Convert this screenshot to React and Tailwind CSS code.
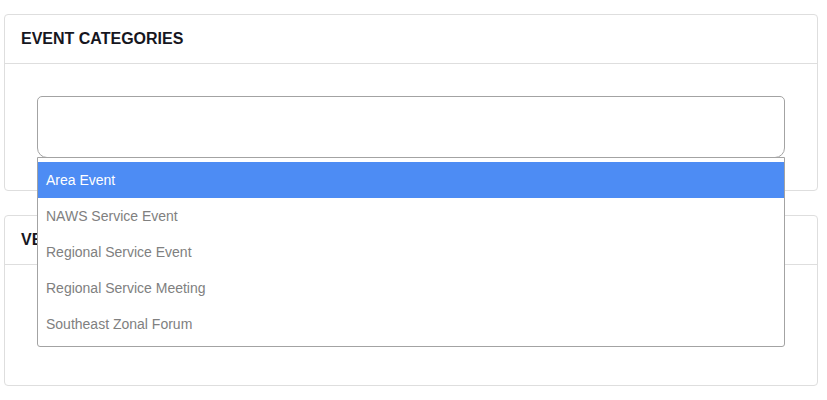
import React, { useState } from "react";

const CATEGORIES = [
  "Area Event",
  "NAWS Service Event",
  "Regional Service Event",
  "Regional Service Meeting",
  "Southeast Zonal Forum",
];

function Card({ title, children }) {
  return (
    <div className="rounded-[4px] border border-[#dedede] bg-white">
      <div className="flex h-[49px] items-center border-b border-[#dedede] px-4 text-[16px] font-bold text-[#16161e]">
        {title}
      </div>
      {children}
    </div>
  );
}

export default function App() {
  const [selected, setSelected] = useState("Area Event");

  return (
    <div className="min-h-[400px] bg-white pt-[14px] pl-[4px] pr-[9px] font-['Liberation_Sans',Arial,sans-serif]">
      <Card title="EVENT CATEGORIES">
        <div className="p-8">
          {/* open select */}
          <div className="relative z-10">
            <div className="h-[62px] rounded-t-[5px] rounded-b-[10px] border border-[#a3a3a3] bg-white" />
            <ul className="absolute top-[61px] left-0 right-0 rounded-b-[3px] border border-[#a3a3a3] bg-white py-1">
              {CATEGORIES.map((c) => (
                <li
                  key={c}
                  onMouseDown={() => setSelected(c)}
                  className={
                    c === selected
                      ? "flex h-[36px] items-center bg-[#4d8cf4] px-2 text-[14px] text-white"
                      : "flex h-[36px] items-center px-2 text-[14px] text-[#808080]"
                  }
                >
                  {c}
                </li>
              ))}
            </ul>
          </div>
        </div>
      </Card>

      <div className="mt-6">
        <Card title="VENUE">
          <div className="h-[120px]" />
        </Card>
      </div>
    </div>
  );
}
